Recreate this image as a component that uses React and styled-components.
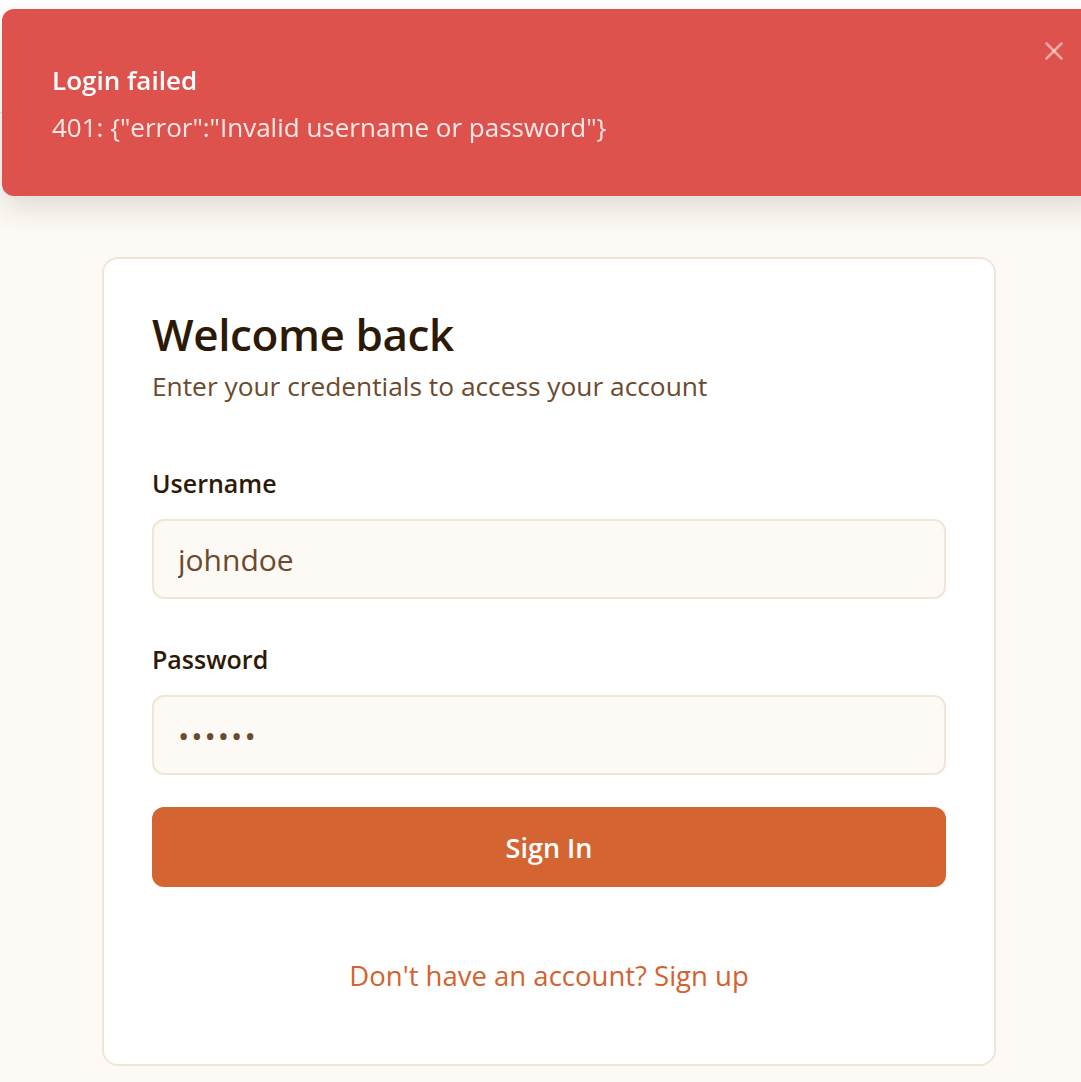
import styled, { createGlobalStyle } from "styled-components";
import { X } from "lucide-react";

const GlobalStyle = createGlobalStyle`
  html, body {
    margin: 0;
    padding: 0;
    background: #fdf9f4;
    font-family: "Open Sans", "Noto Sans", sans-serif;
  }
  * {
    box-sizing: border-box;
  }
`;

const Header = styled.header`
  height: 113px;
  background: #ffffff;
  border-bottom: 1px solid #f0e4d6;
`;

const Page = styled.main`
  padding: 32px 85px 40px 102px;
`;

const Card = styled.div`
  background: #ffffff;
  border: 2px solid #f1e5d8;
  border-radius: 16px;
  padding: 48px 48px 71px;
  margin-top: 112px;
`;

const Title = styled.h1`
  margin: 0;
  font-size: 44px;
  line-height: 54px;
  font-weight: 600;
  color: #2d1a06;
  letter-spacing: -0.4px;
`;

const Subtitle = styled.p`
  margin: 7px 0 0;
  font-size: 26.3px;
  line-height: 36px;
  color: #6b4a2e;
`;

const Form = styled.form`
  display: flex;
  flex-direction: column;
  margin-top: 64px;
`;

const Field = styled.div`
  display: flex;
  flex-direction: column;
  gap: 21px;
  margin-bottom: ${(p) => p.gap || 45}px;
`;

const Label = styled.label`
  font-size: 25px;
  line-height: 30px;
  font-weight: 600;
  color: #2d1a06;
`;

const Input = styled.input`
  height: 80px;
  width: 100%;
  border: 2px solid #f1e5d8;
  border-radius: 12px;
  background: #fdf9f4;
  padding: 0 24px;
  font-family: inherit;
  font-size: 30px;
  color: #6b4a2e;
  outline: none;
  letter-spacing: ${(p) => (p.type === "password" ? "2px" : "0")};
`;

const Button = styled.button`
  height: 80px;
  width: 100%;
  border: none;
  border-radius: 12px;
  background: #d46532;
  color: #ffffff;
  font-family: inherit;
  font-size: 27px;
  font-weight: 600;
  cursor: pointer;
`;

const Footer = styled.p`
  margin: 72px 0 0;
  text-align: center;
  font-size: 27.5px;
  line-height: 34px;
  font-weight: 500;
  color: #d4622f;
`;

const Toast = styled.div`
  position: fixed;
  top: 9px;
  left: 2px;
  right: -24px;
  height: 187px;
  background: #de524e;
  border-radius: 12px;
  padding: 52px 50px;
  box-shadow: 0 12px 28px rgba(60, 40, 20, 0.14);
  color: #ffffff;
`;

const ToastTitle = styled.div`
  font-size: 26px;
  line-height: 38px;
  font-weight: 600;
`;

const ToastBody = styled.div`
  margin-top: 10px;
  font-size: 26px;
  line-height: 36px;
  color: #fde9e6;
`;

const Close = styled.button`
  position: absolute;
  top: 27px;
  right: 36px;
  padding: 0;
  border: none;
  background: none;
  color: rgba(255, 255, 255, 0.5);
  display: flex;
  cursor: pointer;
`;

export default function App() {
  return (
    <>
      <GlobalStyle />
      <Header />
      <Page>
        <Card>
          <Title>Welcome back</Title>
          <Subtitle>Enter your credentials to access your account</Subtitle>
          <Form onSubmit={(e) => e.preventDefault()}>
            <Field>
              <Label>Username</Label>
              <Input type="text" defaultValue="johndoe" />
            </Field>
            <Field gap={32}>
              <Label>Password</Label>
              <Input type="password" defaultValue="secret" />
            </Field>
            <Button type="submit">Sign In</Button>
          </Form>
          <Footer>Don't have an account? Sign up</Footer>
        </Card>
      </Page>
      <Toast>
        <ToastTitle>Login failed</ToastTitle>
        <ToastBody>401: {'{"error":"Invalid username or password"}'}</ToastBody>
        <Close aria-label="Close">
          <X size={30} strokeWidth={2} />
        </Close>
      </Toast>
    </>
  );
}
